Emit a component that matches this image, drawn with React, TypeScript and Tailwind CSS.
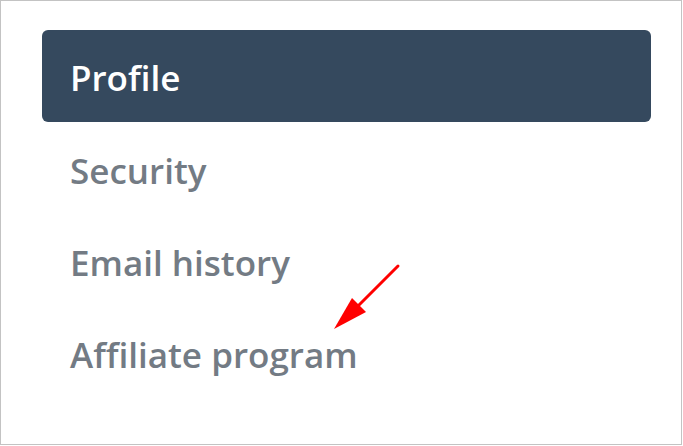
import React from "react";

const items = ["Security", "Email history", "Affiliate program"];

export default function App() {
  return (
    <div className="relative w-[683px] h-[446px] bg-white">
      <div
        className="w-[682px] h-[445px] border border-[#c3c3c3] pt-[29px] pl-[41px] pr-[30px]"
        style={{ fontFamily: '"Open Sans", "Noto Sans", sans-serif' }}
      >
        <div className="flex flex-col">
          <div className="h-[92px] rounded-[6px] bg-[#35495e] flex items-center pl-[28px] pt-[4px] text-white text-[35px] font-semibold">
            Profile
          </div>
          {items.map((t) => (
            <div
              key={t}
              className="h-[92px] flex items-center pl-[28px] pt-[6px] text-[#737b84] text-[35px] font-[560]"
            >
              {t}
            </div>
          ))}
        </div>
      </div>
      <svg className="absolute left-0 top-0" width="683" height="446">
        <line x1="398" y1="266" x2="350" y2="314" stroke="#ff0000" strokeWidth="3" strokeLinecap="round" />
        <polygon points="334,329 352,298 366,312" fill="#ff0000" />
      </svg>
    </div>
  );
}
